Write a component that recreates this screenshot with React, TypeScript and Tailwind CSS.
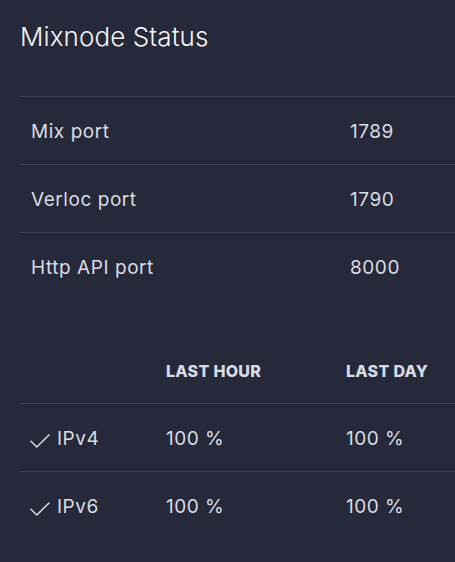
import React from "react";

const ports = [
  { label: "Mix port", value: "1789" },
  { label: "Verloc port", value: "1790" },
  { label: "Http API port", value: "8000" },
];

const routing = [
  { label: "IPv4", hour: "100 %", day: "100 %" },
  { label: "IPv6", hour: "100 %", day: "100 %" },
];

function CheckIcon() {
  return (
    <svg width="20" height="14" viewBox="0 0 20 14" className="shrink-0 mt-[3px]">
      <path
        d="M1 7.2 L6.8 13 L19 1"
        fill="none"
        stroke="#d9dbe3"
        strokeWidth="1.5"
        strokeLinecap="round"
        strokeLinejoin="round"
      />
    </svg>
  );
}

export default function App() {
  return (
    <div
      className="w-[455px] h-[562px] overflow-hidden bg-[#262939] pl-5 pt-[19px] text-[#d9dbe3]"
      style={{ fontFamily: "Inter, 'Open Sans', sans-serif" }}
    >
      <h1 className="text-[26px] leading-[36px] font-light text-[#f4f5f8] tracking-[0.1px]">
        Mixnode Status
      </h1>

      <div className="mt-[41px] w-[460px] border-t border-[#3b3e50]">
        {ports.map((p, i) => (
          <div
            key={p.label}
            className={`flex h-[68px] items-center pt-[3px] text-[19px] tracking-[0.55px] ${
              i < ports.length - 1 ? "border-b border-[#3b3e50]" : ""
            }`}
          >
            <div className="w-[330px] pl-[11px]">{p.label}</div>
            <div>{p.value}</div>
          </div>
        ))}
      </div>

      <div className="mt-[35px] w-[460px]">
        <div className="flex h-[68px] items-center pt-[3px] border-b border-[#3b3e50] text-[16px] tracking-[0.3px] font-extrabold uppercase">
          <div className="w-[146px]" />
          <div className="w-[180px]">Last hour</div>
          <div>Last day</div>
        </div>
        {routing.map((r, i) => (
          <div
            key={r.label}
            className={`flex h-[68px] items-center pt-[3px] text-[19px] tracking-[0.5px] ${
              i < routing.length - 1 ? "border-b border-[#3b3e50]" : ""
            }`}
          >
            <div className="w-[146px] pl-[10px] flex items-center gap-[7px]">
              <CheckIcon />
              <span>{r.label}</span>
            </div>
            <div className="w-[180px]">{r.hour}</div>
            <div>{r.day}</div>
          </div>
        ))}
      </div>
    </div>
  );
}
